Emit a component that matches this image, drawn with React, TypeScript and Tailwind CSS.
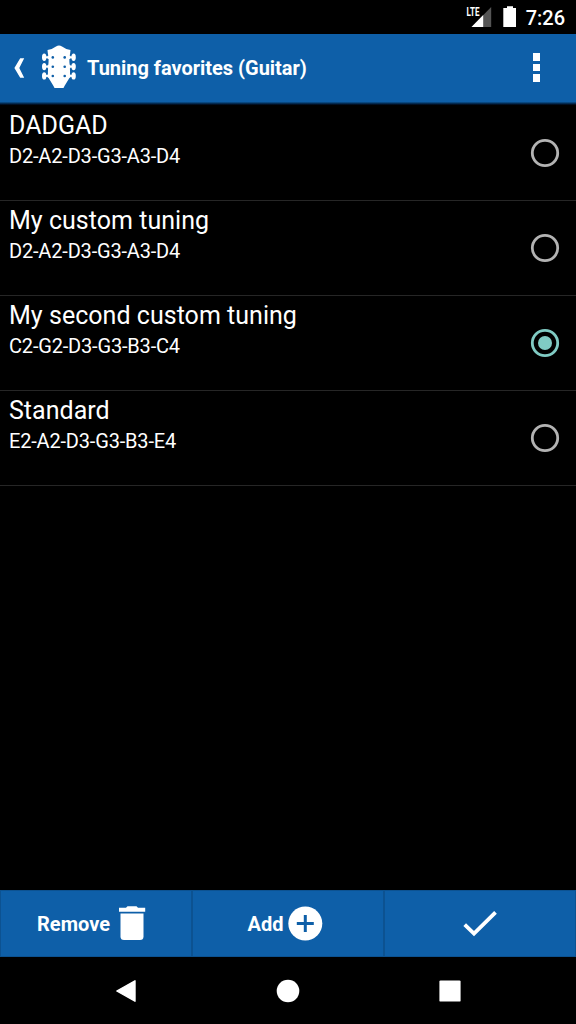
const tunings = [
  { name: "DADGAD", notes: "D2-A2-D3-G3-A3-D4", selected: false },
  { name: "My custom tuning", notes: "D2-A2-D3-G3-A3-D4", selected: false },
  { name: "My second custom tuning", notes: "C2-G2-D3-G3-B3-C4", selected: true },
  { name: "Standard", notes: "E2-A2-D3-G3-B3-E4", selected: false },
];

function StatusBar() {
  return (
    <div className="flex h-[34px] shrink-0 items-start justify-end bg-black pr-[11px]">
      <svg className="mt-[5px] h-[24px] w-[27px]" viewBox="0 0 27 24" aria-label="LTE signal">
        <path d="M26.2 2V22H6.5Z" fill="#555" />
        <path d="M18.2 10V22H6.5Z" fill="#fff" />
        <path d="M0 0H15V12.2H0Z" fill="#000" />
        <text
          x="1.6"
          y="11.2"
          fill="#fff"
          fontFamily="Roboto, sans-serif"
          fontSize="12.5"
          fontWeight="700"
          textLength="13"
          lengthAdjust="spacingAndGlyphs"
        >
          LTE
        </text>
      </svg>
      <svg className="mt-[5px] ml-[11px] h-[24px] w-[14px]" viewBox="0 0 14 24" aria-label="Battery">
        <path d="M4 1.2H10V3H13V22H0.3V3H4Z" fill="#fff" />
      </svg>
      <span className="mt-[6px] ml-[9px] text-[20px] leading-[24px] font-medium">7:26</span>
    </div>
  );
}

function Headstock() {
  const pegs = [26.3, 35.6, 44.9];
  return (
    <svg className="h-[67px] w-[36px]" viewBox="41 34 36 67" aria-label="Guitar">
      <g transform="translate(0 31)" fill="#fff">
        <path d="M47.5 19Q53 17.8 56 15.4Q59 13.8 62 15.4Q65 17.8 70.5 19L70.2 22C69.2 26 69.2 30 69.7 34C70.1 40 70.3 43 69.7 46.5L64.5 55L63.5 57H54.5L53.5 55L48.3 46.5C47.7 43 47.9 40 48.3 34C48.8 30 48.8 26 47.8 22Z" />
        {pegs.map((y) => (
          <g key={y}>
            <rect x="44" y={y - 1} width="30" height="2" />
            <rect x="47.5" y={y - 1.8} width="23" height="3.6" rx="1" />
            <ellipse cx="44.2" cy={y} rx="2.2" ry="3.7" />
            <ellipse cx="73.6" cy={y} rx="2.2" ry="3.7" />
            <circle cx="52.8" cy={y + 0.1} r="1.3" fill="#0e5fa8" />
            <circle cx="64.7" cy={y + 0.1} r="1.3" fill="#0e5fa8" />
          </g>
        ))}
      </g>
    </svg>
  );
}

function AppBar() {
  return (
    <header className="flex h-[72px] shrink-0 flex-col">
      <div className="flex h-[67px] items-center bg-[#0e5fa8] pr-[31px]">
        <svg className="ml-[14px] h-[22px] w-[11px]" viewBox="14 56 11 22" aria-label="Back">
          <path d="M20.2 57.3H24.2L19.3 67L24.2 76.8H20.2L14.4 67Z" fill="#fff" />
        </svg>
        <div className="ml-[16px]">
          <Headstock />
        </div>
        <h1 className="ml-[10px] grow text-[20px] leading-[24px] font-bold tracking-[-0.02px]">
          Tuning favorites (Guitar)
        </h1>
        <button className="flex flex-col gap-[3px] p-[5px]" aria-label="More options">
          <span className="size-[7.5px] bg-white" />
          <span className="size-[7.5px] bg-white" />
          <span className="size-[7.5px] bg-white" />
        </button>
      </div>
      <div className="h-[5px] bg-linear-to-b from-[#0e5fa8] from-15% to-black" />
    </header>
  );
}

function Radio({ selected }: { selected: boolean }) {
  return (
    <svg
      className={selected ? "size-[30px] text-[#80cbc4]" : "size-[30px] text-[#b3b3b3]"}
      viewBox="0 0 30 30"
      role="radio"
      aria-checked={selected}
    >
      <circle cx="15" cy="15" r="12.7" fill="none" stroke="currentColor" strokeWidth="2.8" />
      {selected && <circle cx="15" cy="15" r="7" fill="currentColor" />}
    </svg>
  );
}

function BottomBar() {
  return (
    <div className="grid h-[67px] shrink-0 grid-cols-3 text-[20px] leading-[24px] font-bold">
      <button className="flex items-center justify-center border border-[#0c5291] bg-[#0e5fa8]">
        <span className="ml-[-8px]">Remove</span>
        <svg className="ml-[9px] h-[36px] w-[28px]" viewBox="0.5 0.5 28 36">
          <path d="M0.5 2.3H7.5L9 0.8H18L19.5 2.3H26.7V6.3H0.5Z" fill="#fff" />
          <path d="M2 8H25V31Q25 34.5 21.5 34.5H5.5Q2 34.5 2 31Z" fill="#fff" />
        </svg>
      </button>
      <button className="flex items-center justify-center border border-[#0c5291] bg-[#0e5fa8]">
        <span className="ml-[-4px]">Add</span>
        <svg className="ml-[5px] size-[36px]" viewBox="0.4 0.5 36 36">
          <circle cx="17.7" cy="18" r="17" fill="#fff" />
          <path d="M17.7 9.5V26.5M9.2 18H26.2" stroke="#0e5fa8" strokeWidth="3" />
        </svg>
      </button>
      <button className="flex items-center justify-center border border-[#0c5291] bg-[#0e5fa8]" aria-label="Done">
        <svg className="h-[28px] w-[36px]" viewBox="462 909.5 36 28">
          <path d="M464.7 924.2L474 933.2L495.5 911.9" fill="none" stroke="#fff" strokeWidth="3.8" />
        </svg>
      </button>
    </div>
  );
}

function NavigationBar() {
  return (
    <nav className="flex h-[67px] shrink-0 items-center justify-between bg-black px-[114px]">
      <svg className="size-[24px]" viewBox="0 0 24 24" aria-label="Back">
        <path d="M2.8 12L21 1.8V22.2Z" fill="#fff" stroke="#fff" strokeWidth="1.4" strokeLinejoin="round" />
      </svg>
      <svg className="size-[24px]" viewBox="0 0 24 24" aria-label="Home">
        <circle cx="12" cy="12" r="11.3" fill="#fff" />
      </svg>
      <svg className="size-[24px]" viewBox="0 0 24 24" aria-label="Recent apps">
        <rect x="1.4" y="1.4" width="21.2" height="21.2" rx="1.2" fill="#fff" />
      </svg>
    </nav>
  );
}

export default function App() {
  return (
    <div className="flex h-[1024px] w-[576px] flex-col overflow-hidden bg-black font-[Roboto,sans-serif] text-white">
      <StatusBar />
      <AppBar />
      <main className="grow">
        {tunings.map((t) => (
          <div
            key={t.name}
            className="flex h-[95px] items-center justify-between border-b border-[#262626] pr-[16px] pl-[9px]"
          >
            <div className="h-full pt-[5px]">
              <div className="text-[25px] leading-[30px] tracking-[0.03px]">{t.name}</div>
              <div className="mt-[3px] text-[20px] leading-[24px] tracking-[-0.18px]">{t.notes}</div>
            </div>
            <Radio selected={t.selected} />
          </div>
        ))}
      </main>
      <BottomBar />
      <NavigationBar />
    </div>
  );
}
